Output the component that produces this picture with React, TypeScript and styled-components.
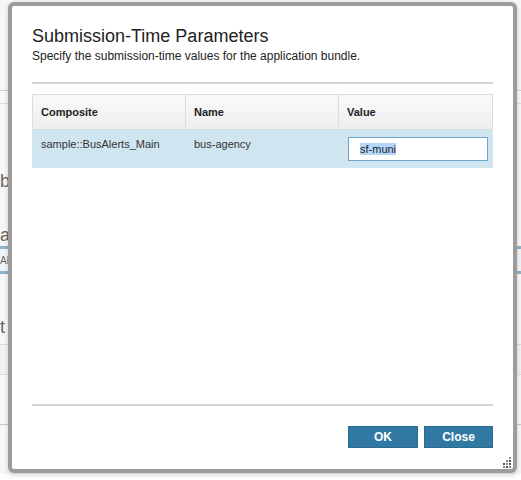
import React from "react";
import styled, { createGlobalStyle } from "styled-components";

const GlobalStyle = createGlobalStyle`
  html, body {
    margin: 0;
    padding: 0;
    width: 521px;
    height: 480px;
    overflow: hidden;
    background: #ffffff;
    font-family: "Liberation Sans", Arial, Helvetica, sans-serif;
  }
`;

const Page = styled.div`
  position: relative;
  width: 521px;
  height: 480px;
  overflow: hidden;
  background: #ffffff;
`;

/* ---------- background page (mostly hidden behind the dialog) ---------- */

const BackPage = styled.div`
  display: flex;
  flex-direction: column;
  width: 100%;
  height: 100%;
`;

const BackBand = styled.div<{ $h: number; $bg?: string; $line?: string }>`
  height: ${(p) => p.$h}px;
  flex: none;
  background: ${(p) => p.$bg || "#ffffff"};
  border-bottom: ${(p) => (p.$line ? `1px solid ${p.$line}` : "none")};
  display: flex;
  align-items: center;
  overflow: hidden;
`;

const BackText = styled.span<{ $size: number }>`
  font-size: ${(p) => p.$size}px;
  color: #666;
  margin-left: 0;
  white-space: nowrap;
`;

const SelectedBand = styled.div`
  height: 22px;
  flex: none;
  border-top: 3px solid #8eb2ca;
  border-bottom: 3px solid #8eb2ca;
  background: #f1f4f7;
  display: flex;
  align-items: center;
  font-size: 10px;
  color: #666;
  overflow: hidden;
`;

/* ---------- dialog ---------- */

const Dialog = styled.div`
  position: absolute;
  left: 8px;
  top: 2px;
  width: 461px;
  height: 463px;
  border: 4px solid #9c9c9c;
  border-radius: 6px;
  background: #ffffff;
  box-shadow: 0 2px 5px rgba(0, 0, 0, 0.18);
  display: flex;
  flex-direction: column;
  padding: 0 20px;
  box-sizing: content-box;
`;

const Header = styled.div`
  display: flex;
  flex-direction: column;
  padding-top: 19px;
`;

const Title = styled.h1`
  margin: 0;
  font-size: 18px;
  line-height: 22px;
  font-weight: normal;
  color: #222;
`;

const Subtitle = styled.p`
  margin: 2px 0 0;
  font-size: 12px;
  line-height: 15px;
  color: #222;
`;

const Rule = styled.div<{ $top: number }>`
  height: 2px;
  margin-top: ${(p) => p.$top}px;
  background: #d2d2d2;
  flex: none;
`;

const Body = styled.div`
  flex: 1;
  padding-top: 10px;
`;

const Table = styled.div`
  display: grid;
  grid-template-columns: 153px 153px 155px;
  width: 461px;
`;

const HeadCell = styled.div<{ $last?: boolean }>`
  height: 34px;
  display: flex;
  align-items: center;
  padding-left: 8px;
  font-size: 11px;
  font-weight: bold;
  color: #222;
  background: linear-gradient(#fafafa, #eeeeee);
  border-top: 1px solid #dcdcdc;
  border-bottom: 1px solid #dcdcdc;
  border-left: 1px solid #dcdcdc;
  border-right: ${(p) => (p.$last ? "1px solid #dcdcdc" : "none")};
`;

const DataCell = styled.div`
  height: 38px;
  box-sizing: border-box;
  padding: 8px 0 0 9px;
  font-size: 11px;
  line-height: 13px;
  color: #333;
  background: #cfe6f0;
`;

const ValueCell = styled(DataCell)`
  padding: 7px 0 0 10px;
`;

const ValueField = styled.div`
  width: 138px;
  height: 22px;
  box-sizing: content-box;
  border: 1px solid #6aa7cf;
  background: #ffffff;
  display: flex;
  align-items: center;
`;

const Selected = styled.span`
  margin-left: 11px;
  font-size: 11px;
  line-height: 12px;
  color: #222;
  background: #b4d6fa;
`;

const Footer = styled.div`
  display: flex;
  flex-direction: column;
  height: 65px;
`;

const Buttons = styled.div`
  display: flex;
  justify-content: flex-end;
  gap: 6px;
  margin-top: 20px;
`;

const Button = styled.button<{ $w: number }>`
  width: ${(p) => p.$w}px;
  height: 22px;
  border: 1px solid #2a6a8f;
  background: #3179a3;
  color: #ffffff;
  font-family: "Liberation Sans", Arial, sans-serif;
  font-size: 12px;
  font-weight: bold;
  padding: 0;
  cursor: pointer;
`;

const Grip = styled.svg`
  position: absolute;
  right: 1px;
  bottom: 1px;
`;

function ResizeGrip() {
  const dots = [
    [8, 0],
    [8, 3],
    [5, 3],
    [8, 6],
    [5, 6],
    [2, 6],
    [8, 9],
    [5, 9],
    [2, 9],
  ];
  return (
    <Grip width="11" height="11" viewBox="0 0 11 11">
      {dots.map(([x, y], i) => (
        <rect key={i} x={x} y={y} width="2" height="2" fill={i % 2 ? "#555" : "#888"} />
      ))}
    </Grip>
  );
}

export default function App() {
  return (
    <Page>
      <GlobalStyle />
      <BackPage>
        <BackBand $h={90} $bg="#f6f6f6" $line="#cfcfcf" />
        <BackBand $h={12} $bg="#f8f8f8" $line="#dedede" />
        <BackBand $h={66} $bg="#f7f7f7" />
        <BackBand $h={22} $bg="#f7f7f7">
          <BackText $size={18}>b</BackText>
        </BackBand>
        <BackBand $h={32} $bg="#f7f7f7" />
        <BackBand $h={22} $bg="#f7f7f7">
          <BackText $size={18}>a</BackText>
        </BackBand>
        <SelectedBand>
          <BackText $size={10}>Al</BackText>
        </SelectedBand>
        <BackBand $h={42} $bg="#f7f7f7" />
        <BackBand $h={22} $bg="#f7f7f7">
          <BackText $size={18}>t</BackText>
        </BackBand>
        <BackBand $h={6} $bg="#f7f7f7" $line="#dcdcdc" />
        <BackBand $h={29} $bg="#f2f2f2" $line="#dcdcdc" />
        <BackBand $h={49} $bg="#f8f8f8" $line="#c8c8c8" />
        <BackBand $h={49} $bg="#f7f7f7" />
      </BackPage>

      <Dialog>
        <Header>
          <Title>Submission-Time Parameters</Title>
          <Subtitle>Specify the submission-time values for the application bundle.</Subtitle>
          <Rule $top={18} />
        </Header>
        <Body>
          <Table>
            <HeadCell>Composite</HeadCell>
            <HeadCell>Name</HeadCell>
            <HeadCell $last>Value</HeadCell>
            <DataCell>sample::BusAlerts_Main</DataCell>
            <DataCell>bus-agency</DataCell>
            <ValueCell>
              <ValueField>
                <Selected>sf-muni</Selected>
              </ValueField>
            </ValueCell>
          </Table>
        </Body>
        <Footer>
          <Rule $top={0} />
          <Buttons>
            <Button $w={70}>OK</Button>
            <Button $w={69}>Close</Button>
          </Buttons>
        </Footer>
        <ResizeGrip />
      </Dialog>
    </Page>
  );
}
